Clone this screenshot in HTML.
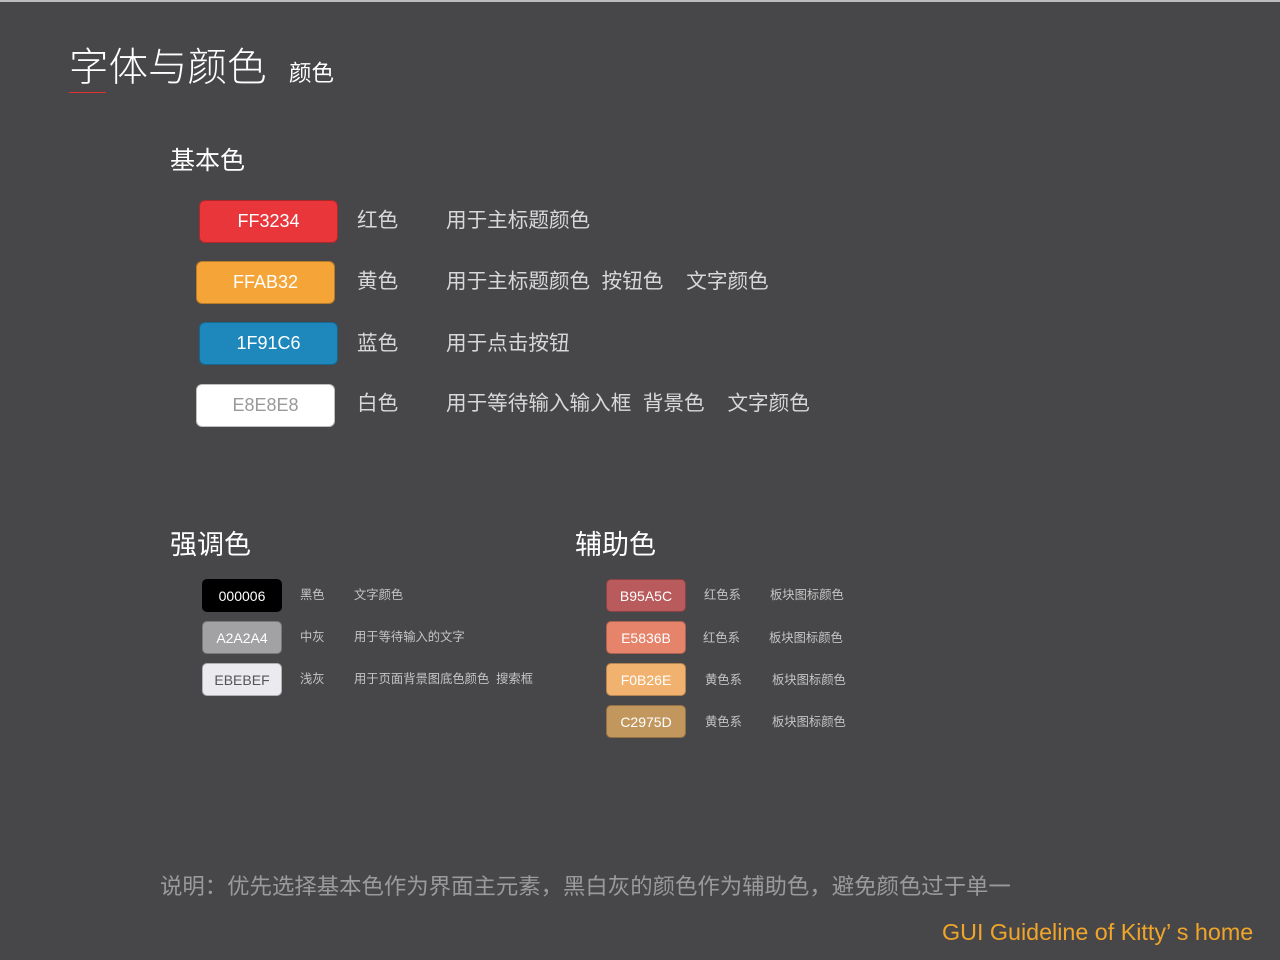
<!DOCTYPE html>
<html><head><meta charset="utf-8"><style>
*{margin:0;padding:0;box-sizing:border-box}
body{width:1280px;height:960px;background:#474749;position:relative;overflow:hidden;font-family:"Liberation Sans","Noto Sans CJK SC",sans-serif;}
.a{position:absolute;white-space:nowrap;line-height:1}
.top{position:absolute;left:0;top:0;width:1280px;height:2px;background:#bdbdbd}
.sw{position:absolute;border-radius:6px;display:flex;align-items:center;justify-content:center;color:#fff;font-size:18px;border:1px solid rgba(0,0,0,.25)}
.ss{position:absolute;border-radius:5px;display:flex;align-items:center;justify-content:center;color:#fff;font-size:14px;width:80px;height:33px;border:1px solid rgba(0,0,0,.25)}
.l{color:#d8d8d8;font-size:20.6px}
.s{color:#c4c4c4;font-size:12.3px}
</style></head><body>
<div class="top"></div>
<div class="a" style="left:69px;top:49px;font-size:39.5px;color:#fff;font-weight:300">字体与颜色</div>
<div style="position:absolute;left:69px;top:92px;width:37px;height:1px;background:#e03030"></div>
<div class="a" style="left:289px;top:63px;font-size:22.5px;color:#fff">颜色</div>
<div class="a" style="left:170px;top:149px;font-size:25px;color:#fff">基本色</div>

<div class="sw" style="left:199px;top:200px;width:139px;height:43px;background:#e8363a">FF3234</div>
<div class="sw" style="left:196px;top:261px;width:139px;height:43px;background:#f5a538">FFAB32</div>
<div class="sw" style="left:199px;top:322px;width:139px;height:43px;background:#1e88bc">1F91C6</div>
<div class="sw" style="left:196px;top:384px;width:139px;height:43px;background:#fff;color:#999">E8E8E8</div>

<div class="a l" style="left:357px;top:211px">红色</div>
<div class="a l" style="left:357px;top:272px">黄色</div>
<div class="a l" style="left:357px;top:334px">蓝色</div>
<div class="a l" style="left:357px;top:394px">白色</div>
<div class="a l" style="left:446px;top:211px">用于主标题颜色</div>
<div class="a l" style="left:446px;top:272px">用于主标题颜色&nbsp; 按钮色&nbsp;&nbsp;&nbsp; 文字颜色</div>
<div class="a l" style="left:446px;top:334px">用于点击按钮</div>
<div class="a l" style="left:446px;top:394px">用于等待输入输入框&nbsp; 背景色&nbsp;&nbsp;&nbsp; 文字颜色</div>

<div class="a" style="left:170px;top:532px;font-size:27px;color:#fff">强调色</div>
<div class="a" style="left:575px;top:532px;font-size:27px;color:#fff">辅助色</div>

<div class="ss" style="left:202px;top:579px;background:#000">000006</div>
<div class="ss" style="left:202px;top:621px;background:#a2a2a4">A2A2A4</div>
<div class="ss" style="left:202px;top:663px;background:#ebebef;color:#555">EBEBEF</div>
<div class="a s" style="left:300px;top:589px">黑色</div>
<div class="a s" style="left:300px;top:631px">中灰</div>
<div class="a s" style="left:300px;top:673px">浅灰</div>
<div class="a s" style="left:354px;top:589px">文字颜色</div>
<div class="a s" style="left:354px;top:631px">用于等待输入的文字</div>
<div class="a s" style="left:354px;top:673px">用于页面背景图底色颜色&nbsp; 搜索框</div>

<div class="ss" style="left:606px;top:579px;background:#b95a5c">B95A5C</div>
<div class="ss" style="left:606px;top:621px;background:#e5836b">E5836B</div>
<div class="ss" style="left:606px;top:663px;background:#f0b26e">F0B26E</div>
<div class="ss" style="left:606px;top:705px;background:#c2975d">C2975D</div>
<div class="a s" style="left:704px;top:589px">红色系</div>
<div class="a s" style="left:703px;top:632px">红色系</div>
<div class="a s" style="left:705px;top:674px">黄色系</div>
<div class="a s" style="left:705px;top:716px">黄色系</div>
<div class="a s" style="left:770px;top:589px">板块图标颜色</div>
<div class="a s" style="left:769px;top:632px">板块图标颜色</div>
<div class="a s" style="left:772px;top:674px">板块图标颜色</div>
<div class="a s" style="left:772px;top:716px">板块图标颜色</div>

<div class="a" style="left:160px;top:876px;font-size:22.4px;color:#9a9a9a">说明：优先选择基本色作为界面主元素，黑白灰的颜色作为辅助色，避免颜色过于单一</div>
<div class="a" style="left:942px;top:921px;font-size:23.3px;color:#f0a52a">GUI Guideline of Kitty’ s home</div>
</body></html>
